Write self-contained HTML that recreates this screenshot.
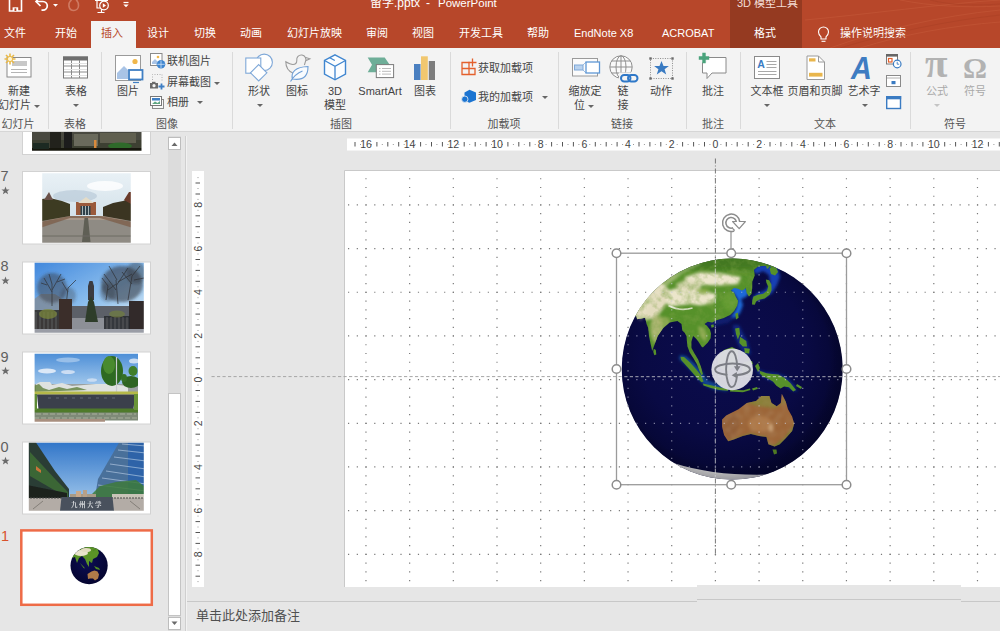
<!DOCTYPE html>
<html lang="zh-CN"><head><meta charset="utf-8"><title>PowerPoint</title>
<style>
html,body{margin:0;padding:0}
body{width:1000px;height:631px;overflow:hidden;position:relative;background:#e6e6e6;font-family:"Liberation Sans","Noto Sans CJK SC",sans-serif;font-size:11px;color:#444}
.a{position:absolute}
.t{position:absolute;white-space:nowrap;line-height:14px;height:14px}
.c{transform:translateX(-50%);text-align:center}
#top{left:0;top:0;width:1000px;height:47.5px;background:#b7472a}
#top .t{color:#fff;font-size:11px}
#ctx{left:730px;top:0;width:72px;height:48px;background:#953a21}
#tabon{left:91px;top:21px;width:45px;height:28px;background:#f3f3f3}
#rib{left:0;top:47px;width:1000px;height:84px;background:#f3f3f3;border-bottom:1px solid #d6d6d6}
#rib .t{color:#444;font-size:11px;margin-top:1px}
#rib i.a{margin-top:1px}
#rib .g{color:#555}
.sep{position:absolute;top:5px;width:1px;height:77px;background:#dadada}
svg{position:absolute;overflow:visible}
.dd{display:inline-block;width:0;height:0;border-left:3px solid transparent;border-right:3px solid transparent;border-top:3px solid #666;vertical-align:middle}
</style></head><body>

<!-- ===== TOP BAR ===== -->
<div id="top" class="a" style="z-index:2">
  <div id="ctx" class="a"></div>
  <div id="tabon" class="a"></div>
  <span class="t" style="left:4px;top:26px">文件</span>
  <span class="t" style="left:55px;top:26px">开始</span>
  <span class="t" style="left:101px;top:26px;color:#b7472a">插入</span>
  <span class="t" style="left:147px;top:26px">设计</span>
  <span class="t" style="left:194px;top:26px">切换</span>
  <span class="t" style="left:240px;top:26px">动画</span>
  <span class="t" style="left:287px;top:26px">幻灯片放映</span>
  <span class="t" style="left:366px;top:26px">审阅</span>
  <span class="t" style="left:412px;top:26px">视图</span>
  <span class="t" style="left:459px;top:26px">开发工具</span>
  <span class="t" style="left:527px;top:26px">帮助</span>
  <span class="t" style="left:574px;top:26px">EndNote X8</span>
  <span class="t" style="left:662px;top:26px">ACROBAT</span>
  <span class="t" style="left:754px;top:26px">格式</span>
  <span class="t" style="left:840px;top:26px">操作说明搜索</span>
  <span class="t" style="left:370px;top:-4px;font-size:12px">留学.pptx</span>
  <span class="t" style="left:426px;top:-4px;font-size:12px">-</span>
  <span class="t" style="left:438px;top:-4px;font-size:11.5px">PowerPoint</span>
  <span class="t" style="left:737px;top:-4px;font-size:11px;color:#f3dcd5">3D 模型工具</span>
  <svg style="left:0;top:0;overflow:hidden" width="1000" height="47.5" viewBox="0 0 1000 47.5" fill="none">
    <!-- decorative lines -->
    <g stroke="#c25636" stroke-width="1" opacity=".7"><path d="M830 48C880 30 940 16 1000 10M860 48C905 34 950 26 1000 22M900 0C930 6 965 8 1000 6M805 20C870 14 940 4 1000 0"/></g>
    <g stroke="#a93f24" stroke-width="1" opacity=".55"><path d="M840 48C890 33 945 21 1000 15M930 0C950 5 975 6 1000 4"/></g>
    <!-- save -->
    <path d="M9.500 -2v13h12v-13" stroke="#fff" stroke-width="1.600"/>
    <rect x="12.600" y="7.300" width="5.600" height="3.700" fill="#fff"/><rect x="14.500" y="8.300" width="1.800" height="2.700" fill="#b7472a"/>
    <!-- undo -->
    <path d="M36.500 1.500h6.500a4.300 4.300 0 0 1 0 8.600h-1.500" stroke="#fff" stroke-width="1.700"/>
    <path d="M40.500 -3l-4.500 4.500 4.500 4.500" stroke="#fff" stroke-width="1.700"/>
    <path d="M53 4l2.500 2.800 2.500-2.800z" fill="#fff"/>
    <!-- redo (disabled) -->
    <path d="M73.500 -2c-3 2-5 5-4.500 8.500.5 2.500 2.500 4 4.800 4s4.500-1.800 4.700-4.500c.2-3-1.500-6-4-8" stroke="#cf7a62" stroke-width="1.600"/>
    <!-- present -->
    <path d="M95 0.500h13M97 0.500v7.500h4M101.500 8v4M97.500 12.500h7" stroke="#fff" stroke-width="1.200"/>
    <circle cx="104" cy="5.500" r="4.300" fill="#b7472a" stroke="#fff" stroke-width="1.200"/><path d="M102.800 3.300l3.200 2.200-3.200 2.200z" fill="#fff"/>
    <!-- customize -->
    <path d="M123.500 2.500h5" stroke="#fff" stroke-width="1.200"/><path d="M123.300 4.500l2.700 2.800 2.700-2.800z" fill="#fff"/>
    <!-- lightbulb -->
    <path d="M821 36.800c-1.800-1.500-2.500-3.100-2.500-4.800a5 5 0 0 1 10 0c0 1.700-.7 3.300-2.500 4.800v2.200h-5z" stroke="#fff" stroke-width="1.100"/>
    <path d="M821.500 41.300h4" stroke="#fff" stroke-width="1.100"/>
  </svg>
</div>

<!-- ===== RIBBON ===== -->
<div id="rib" class="a">
  <div class="sep" style="left:48px"></div><div class="sep" style="left:101px"></div><div class="sep" style="left:232px"></div>
  <div class="sep" style="left:450px"></div><div class="sep" style="left:558px"></div><div class="sep" style="left:686px"></div>
  <div class="sep" style="left:740px"></div><div class="sep" style="left:910px"></div>
  <!-- big button labels (top = y-48-7) -->
  <span class="t c" style="left:19px;top:36px">新建</span>
  <span class="t" style="left:-2px;top:50px">幻灯片 <i class="dd"></i></span>
  <span class="t c" style="left:76px;top:36px">表格</span><i class="dd a" style="left:73px;top:56px"></i>
  <span class="t c" style="left:128px;top:36px">图片</span>
  <span class="t" style="left:167px;top:6px">联机图片</span>
  <span class="t" style="left:167px;top:27px">屏幕截图 <i class="dd"></i></span>
  <span class="t" style="left:167px;top:47px">相册</span><i class="dd a" style="left:197px;top:53px"></i>
  <span class="t c" style="left:259px;top:36px">形状</span><i class="dd a" style="left:257px;top:56px"></i>
  <span class="t c" style="left:297px;top:36px">图标</span>
  <span class="t c" style="left:335px;top:36px">3D</span>
  <span class="t c" style="left:335px;top:50px">模型</span>
  <span class="t c" style="left:380px;top:36px">SmartArt</span>
  <span class="t c" style="left:425px;top:36px">图表</span>
  <span class="t" style="left:478px;top:13px">获取加载项</span>
  <span class="t" style="left:478px;top:42px">我的加载项</span><i class="dd a" style="left:542px;top:48px"></i>
  <span class="t c" style="left:585px;top:36px">缩放定</span>
  <span class="t" style="left:574px;top:50px">位 <i class="dd"></i></span>
  <span class="t c" style="left:623px;top:36px">链</span>
  <span class="t c" style="left:623px;top:50px">接</span>
  <span class="t c" style="left:661px;top:36px">动作</span>
  <span class="t c" style="left:713px;top:36px">批注</span>
  <span class="t c" style="left:767px;top:36px">文本框</span><i class="dd a" style="left:764px;top:56px"></i>
  <span class="t c" style="left:815px;top:36px">页眉和页脚</span>
  <span class="t c" style="left:864px;top:36px">艺术字</span><i class="dd a" style="left:862px;top:56px"></i>
  <span class="t c" style="left:937px;top:36px;color:#a9a9a9">公式</span><i class="dd a" style="left:934px;top:56px;border-top-color:#c4c4c4"></i>
  <span class="t c" style="left:975px;top:36px;color:#a9a9a9">符号</span>
  <!-- group labels -->
  <span class="t c g" style="left:18px;top:69px">幻灯片</span>
  <span class="t c g" style="left:75px;top:69px">表格</span>
  <span class="t c g" style="left:167px;top:69px">图像</span>
  <span class="t c g" style="left:341px;top:69px">插图</span>
  <span class="t c g" style="left:504px;top:69px">加载项</span>
  <span class="t c g" style="left:622px;top:69px">链接</span>
  <span class="t c g" style="left:713px;top:69px">批注</span>
  <span class="t c g" style="left:825px;top:69px">文本</span>
  <span class="t c g" style="left:955px;top:69px">符号</span>
  <!--ICONS-->
<svg style="left:0;top:1px" width="1000" height="83" viewBox="0 48 1000 83" fill="none" stroke-linejoin="miter">
  <!-- new slide -->
  <rect x="7" y="57.5" width="24" height="19.5" fill="#fff" stroke="#8a8a8a" stroke-width="1"/>
  <rect x="12" y="61" width="15" height="5" fill="#c8c8c8"/>
  <path d="M11 69.5h16M11 72.500h16" stroke="#b5b5b5" stroke-width="1"/>
  <g stroke="#e9b949" stroke-width="1.6" stroke-linecap="butt"><path d="M10 53.500v11M4.500 59h11M6 55l8 8M14 55l-8 8"/></g>
  <circle cx="10" cy="59" r="2.600" fill="#fff5d6" stroke="#e9b949" stroke-width="1"/>
  <!-- table -->
  <rect x="63.500" y="57" width="24" height="21" fill="#fff" stroke="#7a7a7a" stroke-width="1"/>
  <rect x="63" y="56.500" width="25" height="4" fill="#6e6e6e"/>
  <path d="M63.500 66h24M63.500 72h24M71.500 60v18M79.500 60v18" stroke="#8a8a8a" stroke-width="1"/>
  <path d="M64 63.500h23M64 69.500h23M64 75.500h23" stroke="#e2e2e2" stroke-width="1"/>
  <!-- picture -->
  <rect x="115.500" y="55.500" width="25" height="25" fill="#fff" stroke="#9a9a9a" stroke-width="1"/>
  <path d="M117 79v-6l7-7 4 4v9z" fill="#a9c4e6"/>
  <circle cx="135" cy="61.500" r="2.600" fill="#f0b74a"/>
  <rect x="129" y="70" width="13.500" height="9.500" fill="#fff" stroke="#3f7fc4" stroke-width="1.800"/>
  <path d="M133 82.500h6" stroke="#3f7fc4" stroke-width="1.200"/>
  <!-- online picture -->
  <rect x="150.500" y="53.500" width="11.500" height="12" fill="#fff" stroke="#8a8a8a" stroke-width="1"/>
  <path d="M152 64v-2l3-3 2 2v3z" fill="#a9c4e6"/><circle cx="158" cy="57" r="1.300" fill="#f0b74a"/>
  <circle cx="161" cy="64.300" r="4.300" fill="#3f86d0"/>
  <path d="M161 60.500v7.600M157.300 64.300h7.400" stroke="#cfe2f6" stroke-width=".8"/>
  <!-- screenshot -->
  <path d="M152.500 80v-5.500h9.500v6" stroke="#b0b0b0" stroke-width="1" stroke-dasharray="1 1.500"/>
  <rect x="150" y="83" width="8" height="5.500" fill="#6a6a6a"/><rect x="152" y="81.800" width="3.500" height="1.500" fill="#6a6a6a"/>
  <circle cx="154" cy="85.700" r="1.600" fill="#f3f3f3"/>
  <path d="M161.500 83.500v6M158.500 86.500h6" stroke="#3f7fc4" stroke-width="1.800"/>
  <!-- album -->
  <rect x="152.500" y="99.500" width="11" height="9" fill="#f8f8f8" stroke="#8a8a8a" stroke-width="1"/>
  <rect x="150.500" y="96.500" width="11" height="9" fill="#fff" stroke="#777" stroke-width="1"/>
  <rect x="152" y="98" width="8" height="2.500" fill="#3f7fc4"/>
  <path d="M152 104l3-2.500 2.500 1.500 2.500-2v3z" fill="#5fa783"/>
  <!-- shapes -->
  <circle cx="264.200" cy="62.300" r="8.200" fill="#fff" stroke="#7fa8d8" stroke-width="1.100"/>
  <rect x="245.800" y="58" width="15" height="15.200" fill="#fff" stroke="#7fa8d8" stroke-width="1.100"/>
  <path d="M258.700 64.600l8.200 8.200-8.200 8.200-8.200-8.200z" fill="#fff" stroke="#7fa8d8" stroke-width="1.100"/>
  <!-- icons (duck + leaf) -->
  <path d="M296.800 60.500a4.600 4.600 0 1 1 8.600 1.200l-1 3.300M305.800 57.500l4 1.300-3.500 1.600M296.800 60.500c0 3-1.500 4-4 4-2.500 0-5-1.500-7-2.700 0 6 2.500 9.500 7.500 11.500" stroke="#9a9a9a" stroke-width="1.100" fill="none"/>
  <path d="M292.500 79c-2-7 3-12 15.500-12.500 0 8-3 14.500-15.500 12.500z" fill="#f8fbfe" stroke="#6f9fd6" stroke-width="1.100"/>
  <path d="M290.500 81.500c3-5 7-8.500 12-10.500" stroke="#6f9fd6" stroke-width="1.100"/>
  <!-- 3D cube -->
  <path d="M335 54.800l10.500 5.700v13.500l-10.500 5.800-10.500-5.800v-13.500z" fill="#fbfdff" stroke="#3f86d0" stroke-width="1.400"/>
  <path d="M324.500 60.500l10.500 5.700 10.500-5.700M335 66.200v13.500M329.800 57.700l5 2.800" stroke="#3f86d0" stroke-width="1.300"/>
  <!-- SmartArt -->
  <path d="M367.700 57.400h17l5 7.400-5 7.400h-17l4.300-7.400z" fill="#6eae98"/>
  <rect x="376.300" y="64.600" width="17.300" height="13" fill="#fff" stroke="#7a7a7a" stroke-width="1"/>
  <path d="M379 68.500h1.500M382 68.500h9M379 71.300h1.500M382 71.300h9M379 74.100h1.500M382 74.100h9" stroke="#a8a8a8" stroke-width=".8"/>
  <!-- chart -->
  <rect x="414" y="64" width="6.500" height="16" fill="#4a7fc0"/><rect x="421" y="56.300" width="6.800" height="23.700" fill="#f1c76f"/><rect x="428.800" y="61" width="6.200" height="19" fill="#7d7d7d"/>
  <!-- get addins -->
  <path d="M462 62.500h7v12h-7zM462 68.500h13v6h-6M469 68.500v6M475 68.500v6" stroke="#e4602c" stroke-width="1.300"/>
  <path d="M472.500 58.500v8M468.500 62.500h8" stroke="#e4602c" stroke-width="1.300"/>
  <!-- my addins -->
  <path d="M469.500 89.800l6.500 2.700v7.500l-6.500 2.800-5-2v-8.300z" fill="#1b74d1"/>
  <circle cx="464.800" cy="99.200" r="3.200" fill="#1b74d1" stroke="#f3f3f3" stroke-width=".8"/>
  <!-- zoom -->
  <rect x="572.500" y="58.500" width="25" height="17.500" fill="#fbfbfb" stroke="#9a9a9a" stroke-width="1"/>
  <path d="M583 65l3-3M583 70l3 3" stroke="#9fbfe3" stroke-width="1"/>
  <rect x="574.500" y="65" width="8.500" height="5" fill="#b9d2ee" stroke="#7fa8d8" stroke-width="1"/>
  <rect x="586" y="62" width="13.500" height="11" fill="#fff" stroke="#5f97d5" stroke-width="1.300"/>
  <!-- link globe -->
  <circle cx="621" cy="67" r="11.200" fill="#fafafa" stroke="#8f8f8f" stroke-width="1"/>
  <ellipse cx="621" cy="67" rx="5" ry="11.200" stroke="#8f8f8f" stroke-width="1"/>
  <path d="M621 55.800v22.400M610 67h22M611.500 61h19M611.500 73h19" stroke="#8f8f8f" stroke-width="1"/>
  <rect x="619" y="72.500" width="20" height="11" fill="#f3f3f3"/>
  <rect x="621" y="75" width="9.500" height="6.500" rx="3.200" stroke="#2f78c8" stroke-width="2"/>
  <rect x="628" y="75" width="9.500" height="6.500" rx="3.200" stroke="#2f78c8" stroke-width="2"/>
  <!-- action -->
  <rect x="650.500" y="58.500" width="22" height="20" stroke="#8a8a8a" stroke-width="1" stroke-dasharray="1 1.400"/>
  <g fill="#6a6a6a"><rect x="649.300" y="57.300" width="2.400" height="2.400"/><rect x="671.300" y="57.300" width="2.400" height="2.400"/><rect x="649.300" y="77.300" width="2.400" height="2.400"/><rect x="671.300" y="77.300" width="2.400" height="2.400"/></g>
  <path d="M661.500 61l2 5h5.400l-4.300 3.300 1.600 5.200-4.700-3.200-4.700 3.200 1.600-5.200-4.300-3.300h5.400z" fill="#3a7bc2"/>
  <!-- comment -->
  <path d="M702.500 57.500h23.500v15.500h-14l-5 5.500v-5.500h-4.500z" fill="#fff" stroke="#8a8a8a" stroke-width="1"/>
  <path d="M704 52.500v10M699 57.500h10" stroke="#f3f3f3" stroke-width="5.500"/>
  <path d="M704 52.800v10.400M698.800 58h10.400" stroke="#4aa37c" stroke-width="3.400"/>
  <!-- textbox -->
  <rect x="754.500" y="56.500" width="25" height="22" fill="#fff" stroke="#8a8a8a" stroke-width="1"/>
  <path d="M766.500 61.500h10M766.500 64.500h10M766.500 67.500h10M758 71.500h18.500M758 74.500h18.500" stroke="#a8a8a8" stroke-width="1"/>
  <text x="757.300" y="68.300" font-family="Liberation Sans,sans-serif" font-size="10.500" font-weight="bold" fill="#3a7bc2" stroke="none">A</text>
  <!-- header footer -->
  <path d="M807 56h11.500l6 6v17.500h-17.500z" fill="#fff" stroke="#9a9a9a" stroke-width="1"/>
  <path d="M818.500 56v6h6" stroke="#9a9a9a" stroke-width="1"/>
  <rect x="809" y="58.300" width="6.500" height="3.200" fill="#e9b64c"/><rect x="809" y="72.800" width="13.500" height="3.800" fill="#e9b64c"/>
  <!-- wordart -->
  <text x="851" y="79.500" font-family="Liberation Sans,sans-serif" font-size="31" font-style="italic" font-weight="bold" fill="#3e7cc2" stroke="none" transform="translate(851 79.500) scale(.93 1) translate(-851 -79.500)">A</text>
  <!-- small text icons -->
  <rect x="886.500" y="54.500" width="11" height="9.500" fill="#fff" stroke="#777" stroke-width="1"/><rect x="886" y="54" width="12" height="2.600" fill="#666"/>
  <rect x="888.500" y="58.500" width="3.500" height="3.500" fill="#fff" stroke="#e4602c" stroke-width="1.200"/>
  <circle cx="897.200" cy="64" r="3.800" fill="#fff" stroke="#3a7bc2" stroke-width="1.200"/><path d="M897.200 61.800v2.400h2" stroke="#3a7bc2" stroke-width=".9"/>
  <rect x="886.500" y="75.500" width="14" height="11" fill="#fff" stroke="#8a8a8a" stroke-width="1"/><path d="M887 78h13" stroke="#b0b0b0" stroke-width="1"/><rect x="891.500" y="81" width="4" height="3.200" fill="#3a7bc2"/>
  <rect x="886.700" y="96.700" width="13.800" height="11.800" fill="#fff" stroke="#3a7bc2" stroke-width="1.400"/><rect x="886" y="96" width="15.200" height="3.300" fill="#3a7bc2"/>
  <!-- pi omega -->
  <text x="925" y="77.300" font-family="Liberation Serif,serif" font-size="41" font-weight="bold" fill="#b2b2b2" stroke="none">π</text>
  <text x="963" y="77.600" font-family="Liberation Serif,serif" font-size="30" font-weight="bold" fill="#b2b2b2" stroke="none">Ω</text>
</svg>
</div>

<!-- ===== LEFT PANEL ===== -->
<div id="left" class="a" style="left:0;top:132px;width:190px;height:499px;overflow:hidden">
<svg style="left:0;top:0" width="190" height="499" viewBox="0 132 190 499">
<defs>
<filter id="tb" x="-5%" y="-5%" width="110%" height="110%"><feGaussianBlur stdDeviation="0.6"/></filter>
<filter id="tb2" x="-10%" y="-10%" width="120%" height="120%"><feGaussianBlur stdDeviation="1.6"/></filter>
<linearGradient id="sky7" x1="0" y1="0" x2="0" y2="1"><stop offset="0" stop-color="#e9f1f6"/><stop offset="1" stop-color="#d4e2ea"/></linearGradient>
<linearGradient id="sky8" x1="0" y1="0" x2="1" y2="1"><stop offset="0" stop-color="#3f86dc"/><stop offset=".6" stop-color="#8ec0ee"/><stop offset="1" stop-color="#d9ebf7"/></linearGradient>
<linearGradient id="sky9" x1="0" y1="0" x2="0" y2="1"><stop offset="0" stop-color="#4a8cd6"/><stop offset="1" stop-color="#a9cdee"/></linearGradient>
<linearGradient id="sky10" x1="0" y1="0" x2="0" y2="1"><stop offset="0" stop-color="#2f74c8"/><stop offset="1" stop-color="#9cc4ea"/></linearGradient>
<radialGradient id="mg" cx=".45" cy=".4" r=".6"><stop offset="0" stop-color="#0c0d55"/><stop offset="1" stop-color="#050530"/></radialGradient>
<clipPath id="c6"><rect x="32" y="132" width="109.500" height="18.800"/></clipPath>
<clipPath id="c7"><rect x="42.200" y="173.300" width="88.600" height="69.400"/></clipPath>
<clipPath id="c8"><rect x="34.600" y="262.800" width="109.200" height="70"/></clipPath>
<clipPath id="c9"><rect x="34.600" y="353.800" width="103.400" height="68"/></clipPath>
<clipPath id="c10"><rect x="28.800" y="442.800" width="115" height="68"/></clipPath>
<clipPath id="c11"><circle cx="89.100" cy="565.600" r="18.600"/></clipPath>
</defs>
<!-- slide frames -->
<g fill="#fff" stroke="#d2d2d2" stroke-width="1">
<rect x="22.500" y="120" width="128" height="34.500"/>
<rect x="22.500" y="171.500" width="128" height="72.500"/>
<rect x="22.500" y="262" width="128" height="72"/>
<rect x="22.500" y="352" width="128" height="72"/>
<rect x="22.500" y="442" width="128" height="72"/>
</g>
<rect x="21.300" y="530.400" width="130.500" height="74.400" fill="#fff" stroke="#ee6b47" stroke-width="2.500"/>
<!-- 6 -->
<g clip-path="url(#c6)"><g filter="url(#tb)">
<rect x="30" y="130" width="114" height="22" fill="#3d3f33"/>
<rect x="30" y="130" width="114" height="10" fill="#4a4a40"/>
<rect x="50" y="132" width="11" height="16" fill="#23241f"/><rect x="64" y="132" width="8" height="16" fill="#1c1d1a"/>
<rect x="74" y="134" width="24" height="12" fill="#6b6b5c"/>
<rect x="100" y="133" width="36" height="10" fill="#605f50"/>
<ellipse cx="120" cy="146" rx="12" ry="3.500" fill="#2f6a2a"/>
<rect x="94" y="140" width="2.500" height="8" fill="#d98a3a"/>
<rect x="30" y="148" width="114" height="4" fill="#15160f"/>
<rect x="33" y="143" width="16" height="6" fill="#1f2a22"/>
</g></g>
<!-- 7 -->
<g clip-path="url(#c7)"><g filter="url(#tb)">
<rect x="40" y="172" width="93" height="45" fill="url(#sky7)"/>
<ellipse cx="75" cy="196" rx="22" ry="6" fill="#b9cbd8" opacity=".7"/>
<ellipse cx="105" cy="186" rx="18" ry="5" fill="#fff" opacity=".8"/>
<rect x="40" y="216" width="93" height="28" fill="#8f8b84"/>
<path d="M40 216h93v4h-93z" fill="#a99a8c"/>
<path d="M40 222l30-6h30l33 6v6l-33-10h-30l-30 10z" fill="#7a5a45" opacity=".7"/>
<path d="M42 199l8-1 12 3 8 3 0 12-28 5z" fill="#3d3a24"/>
<path d="M44 200l5-8 4 8z" fill="#6a5148"/>
<path d="M131 198l-8 3-10 2-10 4 0 9 28 5z" fill="#3a3423"/>
<path d="M124 200l5-8 2 0 0 12z" fill="#6b3a2a"/>
<rect x="76" y="202" width="20" height="13" fill="#9a5a3a"/>
<path d="M78 203l8-6 8 6z" fill="#e4dcc8"/>
<rect x="80.500" y="206" width="10" height="9" fill="#2f4148"/>
<path d="M82.500 206v9M85.500 206v9M88.500 206v9" stroke="#c9d4d4" stroke-width=".8"/>
<path d="M84.500 218h3.500l2.500 24h-8.500z" fill="#5f5f55"/>
<path d="M42 236h89" stroke="#6d6a63" stroke-width="1"/>
</g></g>
<!-- 8 -->
<g clip-path="url(#c8)"><g filter="url(#tb)">
<rect x="33" y="261" width="112" height="60" fill="url(#sky8)"/>
<rect x="33" y="315" width="112" height="20" fill="#8d9097"/>
<rect x="60" y="306" width="78" height="12" fill="#5c6068"/>
<path d="M33 300l8-6 14 0 6 4 4 8 0 14-32 0z" fill="#7e8ea0" opacity=".9"/>
<g stroke="#2a2a2a" stroke-width=".9" opacity=".75" fill="none">
<path d="M52 306l0-22M52 292l-8-14M52 290l9-16M52 284l-3-10M47 285l-6-2M57 282l8-3M66 306l2-18 8-8M68 292l-6-10"/>
<path d="M118 304l-2-24M116 290l-12-16M116 286l12-18M117 280l-8-14M118 282l14-8M128 300l4-24 8-10M132 284l-10-12M134 280l10-2M106 300l2-14-6-8M108 290l8-6"/>
</g>
<g filter="url(#tb2)"><ellipse cx="122" cy="284" rx="21" ry="18" fill="#2f2f33" opacity=".55"/><ellipse cx="136" cy="273" rx="10" ry="11" fill="#2f2f33" opacity=".4"/><ellipse cx="108" cy="292" rx="8" ry="10" fill="#2f2f33" opacity=".35"/></g>
<g filter="url(#tb2)"><ellipse cx="52" cy="288" rx="15" ry="15" fill="#34363a" opacity=".45"/><ellipse cx="68" cy="296" rx="8" ry="9" fill="#34363a" opacity=".3"/></g>
<path d="M88 286l1.500-5h3l1.500 5 0 14-6 0z" fill="#3b3b3f"/>
<path d="M85 322l3-20 3-6 3 6 4 20z" fill="#2f3d2c"/>
<rect x="34" y="310" width="26" height="22" fill="#2b2a28" opacity=".85"/>
<rect x="59" y="299" width="13" height="32" fill="#3a2f2b"/>
<rect x="129" y="301" width="15" height="30" fill="#332b29"/>
<rect x="104" y="316" width="26" height="14" fill="#26282c" opacity=".85"/>
<path d="M36 312v18M40 312v18M44 312v18M48 312v18M52 312v18M56 312v18M107 317v12M111 317v12M115 317v12M119 317v12M123 317v12M127 317v12" stroke="#9aa0a4" stroke-width=".6" opacity=".6"/>
<ellipse cx="48" cy="314" rx="9" ry="5" fill="#7f8a3a" opacity=".7"/>
<ellipse cx="117" cy="314" rx="8" ry="3.500" fill="#6f7a45" opacity=".8"/>
<rect x="33" y="329" width="112" height="5" fill="#9a9da6"/>
</g></g>
<!-- 9 -->
<g clip-path="url(#c9)"><g filter="url(#tb)">
<rect x="33" y="352" width="107" height="36" fill="url(#sky9)"/>
<ellipse cx="47" cy="371" rx="9" ry="2.500" fill="#e6eef8" opacity=".9"/><ellipse cx="68" cy="372" rx="7" ry="2" fill="#dfe9f6" opacity=".8"/>
<ellipse cx="68" cy="360" rx="12" ry="2.500" fill="#9fc3ea" opacity=".9"/><ellipse cx="134" cy="361" rx="5" ry="2.500" fill="#e6eef8" opacity=".8"/><ellipse cx="92" cy="380" rx="5" ry="1.800" fill="#d6e4f4" opacity=".8"/>
<rect x="33" y="384" width="107" height="9" fill="#9aa0a0"/>
<path d="M36 384l4-2 10 0 2 3 10-2 10 3 24-2 12 0 20 2 0 8-92 0z" fill="#dfe2e0"/>
<path d="M33 386l6-2 4 4 6 2 10-3 8 2 10-2 10 3-54 2z" fill="#5e7f3a" opacity=".8"/>
<ellipse cx="112" cy="371" rx="11" ry="15" fill="#2f6a22"/><ellipse cx="109" cy="365" rx="6" ry="9" fill="#4a8a2f"/>
<ellipse cx="133" cy="371" rx="4.500" ry="5" fill="#3f7f2a"/><ellipse cx="131" cy="382" rx="9" ry="6" fill="#2f6524"/>
<ellipse cx="124" cy="378" rx="3" ry="4" fill="#356f28"/>
<path d="M116.500 357v36" stroke="#c9ccd0" stroke-width="1.200"/>
<rect x="33" y="391.500" width="107" height="3.200" fill="#b5b94a"/>
<path d="M37 394.500h98l-1.500 15h-95z" fill="#3b404b"/>
<path d="M48 398h70" stroke="#6a707c" stroke-width=".8" stroke-dasharray="3 5"/>
<rect x="33" y="408.500" width="107" height="5" fill="#4f7a2c"/>
<rect x="33" y="394" width="4" height="16" fill="#5d8a34"/><rect x="134" y="394" width="5" height="16" fill="#6a9438"/>
<rect x="33" y="412.500" width="107" height="8" fill="#7f8a78"/>
<path d="M36 414h100M34 418h104" stroke="#a9b09c" stroke-width="1.200" stroke-dasharray="5 2"/>
<rect x="33" y="419" width="72" height="4" fill="#a88f7f"/>
</g></g>
<!-- 10 -->
<g clip-path="url(#c10)"><g filter="url(#tb)">
<rect x="27" y="441" width="119" height="60" fill="url(#sky10)"/>
<path d="M27 441l8 0 20 30 14 18 0 14-42 6z" fill="#2c3d36"/>
<path d="M30 452l26 28 12 12 0 6-38-22z" fill="#3e7036" opacity=".8"/>
<path d="M36 466l5 4 0 3-5-3z" fill="#c9743a"/>
<path d="M27 485l40 8 0 10-40 4z" fill="#1d211f"/>
<path d="M146 441l-26 0-22 38-2 12 0 10 50 4z" fill="#4a6f9a"/>
<path d="M146 441l-18 0 0 56 18 2z" fill="#2f64a8"/>
<path d="M122 444l24 2M118 450l28 3M114 457l32 4M110 464l36 5M106 471l40 6M102 478l44 6M98 485l48 6" stroke="#b9cfe6" stroke-width=".9" opacity=".7"/>
<path d="M90 496l10-10 16-4 20-2 8 6 0 10-54 4z" fill="#3d7a3a" opacity=".85"/>
<rect x="112" y="494" width="34" height="6" fill="#c9c4b8"/><rect x="118" y="499" width="4" height="6" fill="#d8d4c8"/><rect x="132" y="499" width="4" height="6" fill="#d8d4c8"/>
<rect x="70" y="494" width="26" height="6" fill="#a89a86"/><rect x="76" y="491" width="5" height="8" fill="#c9a98a"/><rect x="83" y="490" width="4" height="9" fill="#b8a088"/>
<rect x="27" y="498" width="119" height="14" fill="#b3aca6"/>
<path d="M27 498h119" stroke="#4a4a48" stroke-width="1.200" stroke-dasharray="2 1"/>
<path d="M33 509l10-8M140 509l-10-8" stroke="#77726c" stroke-width=".8"/>
<path d="M61.500 497h51l1.500 14h-54z" fill="#48515d"/>
</g></g>
<text x="87" y="506.800" text-anchor="middle" font-family="Noto Serif CJK SC,Noto Sans CJK SC,serif" font-size="6.500" font-weight="bold" fill="#e8eaec" letter-spacing="1.500" opacity=".92">九州大学</text>
<!-- 11 mini globe -->
<circle cx="89.100" cy="565.600" r="18.600" fill="url(#mg)"/>
<g clip-path="url(#c11)"><g filter="url(#tb)">
<path d="M72 558l3-1 2 6 2-5 3-2 3 3 2 5 2 3 0-6 3 2 1-4 4-2 2-4-1-3 3 0 1-5 5 0-4-6-22-4-14 10z" fill="#5a9428"/>
<ellipse cx="81" cy="553" rx="7" ry="3" fill="#e9e4cc"/><ellipse cx="86" cy="550" rx="5" ry="2" fill="#e2dcc0"/>
<path d="M87.500 574l4-2.500 3-1 3 1 1.500 3-1 4-3 2-2-2-3 0-2 .500z" fill="#b07a48"/>
<path d="M94 566l5 2 1 2-4-1z" fill="#4f8a24"/><path d="M80 563l4 4 1 1.500-1.500-.500z" fill="#4f8a24"/><path d="M90 558l1.500 4-1 .500z" fill="#4f8a24"/>
<path d="M92.500 550l3-2 1-3 1 1-1 3-3 2.500z" fill="#4f8a24"/>
</g></g>
<!-- numbers -->
<g font-family="Liberation Sans,sans-serif" font-size="14.500" fill="#5f5f5f">
<text x="0.500" y="181">7</text><text x="0.500" y="271">8</text><text x="0.500" y="361.500">9</text><text x="0.500" y="451.500">0</text>
<text x="1" y="540.500" fill="#d9512c">1</text>
</g>
<g fill="#6a6a6a">
<path id="st" d="M5.500 186.500l1.100 2.900h3l-2.400 1.900.9 3-2.600-1.800-2.600 1.800.9-3-2.400-1.900h3z"/>
<use href="#st" y="90"/><use href="#st" y="180.300"/><use href="#st" y="270.300"/>
</g>
<!-- scrollbar -->
<rect x="168" y="136" width="13" height="495" fill="#dcdcdc"/>
<rect x="168.500" y="137.500" width="12" height="12" fill="#fff" stroke="#bdbdbd" stroke-width="1"/>
<path d="M171.500 146l3-3.500 3 3.500z" fill="#6a6a6a"/>
<rect x="168.500" y="393.500" width="12" height="222" fill="#fff" stroke="#c4c4c4" stroke-width="1"/>
<rect x="168.500" y="617.500" width="12" height="12" fill="#fff" stroke="#bdbdbd" stroke-width="1"/>
<path d="M171.500 621.500l3 3.500 3-3.500z" fill="#6a6a6a"/>
<path d="M185.500 136v495" stroke="#cfcfcf" stroke-width="1"/>
<path d="M186.500 136v495" stroke="#f2f2f2" stroke-width="1"/>
</svg>
</div>

<!-- ===== WORKSPACE ===== -->
<div id="work" class="a" style="left:0;top:0;width:1000px;height:631px">
<svg id="ws" style="left:0;top:0" width="1000" height="631" viewBox="0 0 1000 631" fill="none">
<defs>
<clipPath id="gc"><circle cx="732.2" cy="369.100" r="110.500"/></clipPath>
<radialGradient id="og" cx="0.46" cy="0.42" r="0.62"><stop offset="0" stop-color="#0b0c4e"/><stop offset="0.6" stop-color="#090a44"/><stop offset="1" stop-color="#04052c"/></radialGradient>
<radialGradient id="lg" cx="0.47" cy="0.465" r="0.545"><stop offset="0.86" stop-color="#000" stop-opacity="0"/><stop offset="1" stop-color="#000018" stop-opacity="0.32"/></radialGradient>
<filter id="b1" x="-20%" y="-20%" width="140%" height="140%"><feGaussianBlur stdDeviation="0.7"/></filter>
<filter id="b3" x="-30%" y="-30%" width="160%" height="160%"><feGaussianBlur stdDeviation="3"/></filter>
<filter id="b2" x="-30%" y="-30%" width="160%" height="160%"><feGaussianBlur stdDeviation="1.6"/></filter>
<filter id="nz" x="0" y="0" width="100%" height="100%"><feTurbulence type="fractalNoise" baseFrequency=".13" numOctaves="3" seed="7"/><feColorMatrix type="matrix" values="0 0 0 0 .2  0 0 0 0 .36  0 0 0 0 .06  2.2 0 0 0 -.9"/></filter>
<filter id="nz2" x="0" y="0" width="100%" height="100%"><feTurbulence type="fractalNoise" baseFrequency=".16" numOctaves="3" seed="3"/><feColorMatrix type="matrix" values="0 0 0 0 .42  0 0 0 0 .25  0 0 0 0 .12  2.2 0 0 0 -.9"/></filter>
<clipPath id="asiac"><path d="M636.3 316.1 L637.1 319.3 L641.1 318.5 L645.1 317.7 L646.6 324.1 L648.2 328 L649 336 L650.6 343.9 L652.2 351 L655.4 342.3 L657.7 336 L663.3 328 L669.6 322.5 L677.5 320.9 L681.5 324.1 L682.3 330.4 L684.7 332.8 L686.5 336 L686.8 340 L687.5 346.6 L689.6 352.2 L693.1 357.8 L696.6 363.4 L698.7 369 L700.1 372.5 L701.5 375.3 L702.9 373.9 L700.8 366.2 L698 359.2 L694.5 353.6 L691.5 348 L691.3 342 L693.1 336 L696 338.5 L698 341 L701.5 346.6 L702.9 347.6 L707.8 342.4 L710.6 338.2 L711 333.5 L709.9 329.6 L706.9 325.7 L704.5 324.1 L707.7 321.7 L712.4 322.5 L715.8 320.5 L723.8 318.1 L730.1 315 L734.1 311 L737.2 305.5 L738 300.7 L735.7 296.8 L734.1 292.8 L730.9 290.4 L734.1 288 L738 288.8 L742 290.4 L745.2 288.8 L745.8 287.6 L746.6 292.8 L749 296.6 L751.6 293.8 L752.2 288 L752.3 281.7 L754.7 275.4 L753.9 269.8 L757.8 266.6 L763.4 265.8 L769.7 266.6 L772.9 267.7 L785 250 L700 235 L620 255 L610 300 L625 318z"/></clipPath><clipPath id="ausc"><path d="M722.100 419.600l4.100-4.100 12.300-6.200 8.300-6.200 9.300-2 5.100-5.200 8.200 0 2.100 7.200 5.200 3.100 4.100-3.100 1-9.300 4.100 8.300 2.100 7.200 4.100 7.200 2.100 7.200-2.100 7.200-6.200 7.200-6.200 6.200-5.100 2.100-6.200-2.100-2-7.200-7.300-1-8.200-2.100-8.200 2.100-8.300 3.100-6.200 2-4.100-6.200-2-8.200z"/></clipPath>
</defs>
<rect x="347" y="138.5" width="653" height="12" fill="#fff"/>
<rect x="192" y="171" width="12" height="416" fill="#fff"/>
<path d="M355.0 142v4.500M376.9 142v4.500M387.8 142v4.500M398.7 142v4.500M420.6 142v4.500M431.5 142v4.500M442.4 142v4.500M464.2 142v4.500M475.2 142v4.500M486.1 142v4.500M507.9 142v4.500M518.8 142v4.500M529.8 142v4.500M551.6 142v4.500M562.5 142v4.500M573.4 142v4.500M595.3 142v4.500M606.2 142v4.500M617.1 142v4.500M639.0 142v4.500M649.9 142v4.500M660.8 142v4.500M682.6 142v4.500M693.6 142v4.500M704.5 142v4.500M726.3 142v4.500M737.2 142v4.500M748.2 142v4.500M770.0 142v4.500M780.9 142v4.500M791.8 142v4.500M813.7 142v4.500M824.6 142v4.500M835.5 142v4.500M857.4 142v4.500M868.3 142v4.500M879.2 142v4.500M901.0 142v4.500M912.0 142v4.500M922.9 142v4.500M944.7 142v4.500M955.6 142v4.500M966.6 142v4.500M988.4 142v4.500M999.3 142v4.500" stroke="#555" stroke-width="1"/>
<path d="M360.5 144v1M371.4 144v1M382.3 144v1M393.3 144v1M404.2 144v1M415.1 144v1M426.0 144v1M436.9 144v1M447.9 144v1M458.8 144v1M469.7 144v1M480.6 144v1M491.5 144v1M502.5 144v1M513.4 144v1M524.3 144v1M535.2 144v1M546.1 144v1M557.1 144v1M568.0 144v1M578.9 144v1M589.8 144v1M600.7 144v1M611.7 144v1M622.6 144v1M633.5 144v1M644.4 144v1M655.3 144v1M666.3 144v1M677.2 144v1M688.1 144v1M699.0 144v1M709.9 144v1M720.9 144v1M731.8 144v1M742.7 144v1M753.6 144v1M764.5 144v1M775.5 144v1M786.4 144v1M797.3 144v1M808.2 144v1M819.1 144v1M830.1 144v1M841.0 144v1M851.9 144v1M862.8 144v1M873.7 144v1M884.7 144v1M895.6 144v1M906.5 144v1M917.4 144v1M928.3 144v1M939.3 144v1M950.2 144v1M961.1 144v1M972.0 144v1M982.9 144v1M993.9 144v1" stroke="#999" stroke-width="1"/>
<path d="M195.500 183.0h4.500M195.500 194.0h4.500M195.500 215.8h4.500M195.500 226.7h4.500M195.500 237.6h4.500M195.500 259.5h4.500M195.500 270.4h4.500M195.500 281.3h4.500M195.500 303.2h4.500M195.500 314.1h4.500M195.500 325.0h4.500M195.500 346.8h4.500M195.500 357.8h4.500M195.500 368.7h4.500M195.500 390.5h4.500M195.500 401.4h4.500M195.500 412.4h4.500M195.500 434.2h4.500M195.500 445.1h4.500M195.500 456.0h4.500M195.500 477.9h4.500M195.500 488.8h4.500M195.500 499.7h4.500M195.500 521.6h4.500M195.500 532.5h4.500M195.500 543.4h4.500M195.500 565.2h4.500M195.500 576.2h4.500" stroke="#555" stroke-width="1"/>
<path d="M197.500 177.6h1M197.500 188.5h1M197.500 199.4h1M197.500 210.3h1M197.500 221.3h1M197.500 232.2h1M197.500 243.1h1M197.500 254.0h1M197.500 264.9h1M197.500 275.9h1M197.500 286.8h1M197.500 297.7h1M197.500 308.6h1M197.500 319.5h1M197.500 330.5h1M197.500 341.4h1M197.500 352.3h1M197.500 363.2h1M197.500 374.1h1M197.500 385.1h1M197.500 396.0h1M197.500 406.9h1M197.500 417.8h1M197.500 428.7h1M197.500 439.7h1M197.500 450.6h1M197.500 461.5h1M197.500 472.4h1M197.500 483.3h1M197.500 494.3h1M197.500 505.2h1M197.500 516.1h1M197.500 527.0h1M197.500 537.9h1M197.500 548.9h1M197.500 559.8h1M197.500 570.7h1M197.500 581.6h1" stroke="#999" stroke-width="1"/>
<g font-family="Liberation Sans,sans-serif" font-size="10.500" fill="#444" text-anchor="middle">
<text x="366.0" y="148.300">16</text>
<text x="409.6" y="148.300">14</text>
<text x="453.3" y="148.300">12</text>
<text x="497.0" y="148.300">10</text>
<text x="540.7" y="148.300">8</text>
<text x="584.4" y="148.300">6</text>
<text x="628.0" y="148.300">4</text>
<text x="671.7" y="148.300">2</text>
<text x="715.4" y="148.300">0</text>
<text x="759.1" y="148.300">2</text>
<text x="802.8" y="148.300">4</text>
<text x="846.4" y="148.300">6</text>
<text x="890.1" y="148.300">8</text>
<text x="933.8" y="148.300">10</text>
<text x="977.5" y="148.300">12</text>
<text transform="translate(201.800 204.9) rotate(-90)">8</text>
<text transform="translate(201.800 248.6) rotate(-90)">6</text>
<text transform="translate(201.800 292.2) rotate(-90)">4</text>
<text transform="translate(201.800 335.9) rotate(-90)">2</text>
<text transform="translate(201.800 379.6) rotate(-90)">0</text>
<text transform="translate(201.800 423.3) rotate(-90)">2</text>
<text transform="translate(201.800 467.0) rotate(-90)">4</text>
<text transform="translate(201.800 510.6) rotate(-90)">6</text>
<text transform="translate(201.800 554.3) rotate(-90)">8</text>
</g>
<rect x="344.5" y="170.5" width="660" height="416.5" fill="#fff"/>
<path d="M344.5 587.0v-416.5h656" stroke="#c9c9c9" stroke-width="1"/>
<path d="M365.96 178.17V587.0M409.64 178.17V587.0M453.32 178.17V587.0M497.00 178.17V587.0M540.68 178.17V587.0M584.36 178.17V587.0M628.04 178.17V587.0M671.72 178.17V587.0M715.40 178.17V587.0M759.08 178.17V587.0M802.76 178.17V587.0M846.44 178.17V587.0M890.12 178.17V587.0M933.80 178.17V587.0M977.48 178.17V587.0" stroke="#7a7a7a" stroke-width="1.200" stroke-dasharray="1.200 7.536" />
<path d="M347.99 204.88H1000M347.99 248.56H1000M347.99 292.24H1000M347.99 335.92H1000M347.99 379.60H1000M347.99 423.28H1000M347.99 466.96H1000M347.99 510.64H1000M347.99 554.32H1000" stroke="#7a7a7a" stroke-width="1.200" stroke-dasharray="1.200 7.536" />
<path d="M211.500 376.600H1000" stroke="#a6a6a6" stroke-width="1" stroke-dasharray="3.200 2.300"/>
<path d="M715.400 158.500V556" stroke="#777" stroke-width="1" stroke-dasharray="5 2 1 2"/>
<g clip-path="url(#gc)">
<circle cx="732.2" cy="369.100" r="111" fill="url(#og)"/>
<!-- shallow seas -->
<g filter="url(#b2)">
<path d="M729 286l8-1 9 2 3 6-3 4-5 2 2 6-3 8-5 5-4-1 5-8 2-9-4-6-5-5z" fill="#1b6fe0" opacity=".95"/>
<path d="M752 271l6-6 12-1 8 5 2 8-3 8-5 8-8 5-8 3-4-3 6-5 8-3 4-7-1-8-6-4-6 3z" fill="#1546c0" opacity=".9"/>
<path d="M704 322l10-3 12-2 6-3 4 3-8 6-14 3-8 1z" fill="#1546c0" opacity=".3"/>
<path d="M680 355l6 1 8 7 7 8 6 9 10 4 12 3-2 4-14-2-10-5-8-9-8-9-8-7z" fill="#1a7ad0" opacity=".55"/>
<path d="M757 369l8 3 12 1 10 4 8 9 2 6-6-2-8-6-10-2-8-4-8-5z" fill="#1546c0" opacity=".5"/>
<path d="M733 325l6 0 4 8 5 9 3 12-6 2-6-10-5-12z" fill="#1546c0" opacity=".45"/>
</g>
<!-- land base -->
<g filter="url(#b1)">
<g fill="#56912a">
<path id="asia" d="M636.3 316.1 L637.1 319.3 L641.1 318.5 L645.1 317.7 L646.6 324.1 L648.2 328 L649 336 L650.6 343.9 L652.2 351 L655.4 342.3 L657.7 336 L663.3 328 L669.6 322.5 L677.5 320.9 L681.5 324.1 L682.3 330.4 L684.7 332.8 L686.5 336 L686.8 340 L687.5 346.6 L689.6 352.2 L693.1 357.8 L696.6 363.4 L698.7 369 L700.1 372.5 L701.5 375.3 L702.9 373.9 L700.8 366.2 L698 359.2 L694.5 353.6 L691.5 348 L691.3 342 L693.1 336 L696 338.5 L698 341 L701.5 346.6 L702.9 347.6 L707.8 342.4 L710.6 338.2 L711 333.5 L709.9 329.6 L706.9 325.7 L704.5 324.1 L707.7 321.7 L712.4 322.5 L715.8 320.5 L723.8 318.1 L730.1 315 L734.1 311 L737.2 305.5 L738 300.7 L735.7 296.8 L734.1 292.8 L730.9 290.4 L734.1 288 L738 288.8 L742 290.4 L745.2 288.8 L745.8 287.6 L746.6 292.8 L749 296.6 L751.6 293.8 L752.2 288 L752.3 281.7 L754.7 275.4 L753.9 269.8 L757.8 266.6 L763.4 265.8 L769.7 266.6 L772.9 267.7 L785 250 L700 235 L620 255 L610 300 L625 318z"/>
<!-- Japan -->
<path d="M752.300 300l1.200-3.500 4.500-1.800 5.200-1 3.800-3 1.200-4.200-1.800-3.800-.500-3.200 3.300.800 2.200 4.200.200 5.800-2 4.500-5 3.700-5.500 1.300-3 1.700-1.300 3.300-2.800-.300z"/>
<path d="M769.500 268.500l3-2.500 4 2 1.500 4-3 3.500-4-1.500z"/>
<path d="M765 262.500l2.500-1 1.500 6-2 1.500z"/>
<!-- Taiwan, Hainan -->
<path d="M735.300 313.800l2.500-1.200 .800 5.200-2.600 1.800z"/>
<path d="M711 325l2.500-.800 .500 2.800-2.500.800z"/>
<!-- Philippines -->
<path d="M735.1 328.4 L739.3 327.7 L740 334 L737.9 339.6 L736 334z"/>
<path d="M740 336.8 L746.3 341 L747 346.6 L742.8 346.6 L739.3 343.1z"/>
<path d="M744.2 348 L749.8 348.7 L749.1 353.6 L744.9 352.9z"/>
<!-- Sri Lanka -->
<path d="M653.800 348.800l2 1.200 .500 4.500-2 .800-1-3.500z"/>
<!-- Sumatra -->
<path d="M680.5 356.7 L684 357.1 L689.6 362 L695.9 369 L701.5 376 L703.6 381.6 L701.5 382.3 L696.6 377.4 L691 371.1 L685.4 364.8 L681.2 359.9z"/>
<!-- Java + lesser sunda -->
<path d="M702.9 383.5 L712 385.6 L720 387.5 L728 388.8 L728 390.8 L719 390 L711 388 L703.5 385.5z"/>
<path d="M730 389.5 L738 390 L743.5 390.2 L749.8 388.4 L750.5 390 L743 392.3 L730 391.5z"/>
<path d="M752 388.500l5-1.500 1 1.800-5 1.800z"/>
<!-- Borneo -->
<path d="M718 356l6-6 8-3 6 3 0 8-4 8-6 5-7-2-3-6z"/>
<!-- Sulawesi -->
<path d="M744 362l8-1 1 3-5 1 3 6-2 4-3-5-3 5-1-6z"/>
<path d="M755 366l3-3 2 5-2 4z"/>
<!-- New Guinea -->
<path d="M760.3 371.1 L766.6 373.2 L772.2 373.9 L778.5 374.6 L784.8 378.1 L790.4 383 L796 390 L793.2 391.4 L789 387.2 L784.1 386.5 L780.6 388.6 L776.4 385.8 L772.9 381.6 L768 378.8 L762.4 376 L759.6 373.2z"/>
<path d="M797 384l5 3-1 2-5-3z"/>
</g>
<!-- Australia -->
<path id="aus" d="M722.100 419.600l4.100-4.100 12.300-6.200 8.300-6.200 9.300-2 5.100-5.200 8.200 0 2.100 7.200 5.200 3.100 4.100-3.100 1-9.300 4.100 8.300 2.100 7.200 4.100 7.200 2.100 7.200-2.100 7.200-6.200 7.200-6.200 6.200-5.100 2.100-6.200-2.100-2-7.200-7.300-1-8.200-2.100-8.200 2.100-8.300 3.100-6.200 2-4.100-6.200-2-8.200z" fill="#9c6539"/>
<path d="M772.500 449.500l4 0 .5 4-3 1z" fill="#4f7a24"/>
</g>
<!-- land colouring (clipped to land) -->
<g clip-path="url(#asiac)">
<g filter="url(#b3)">
<ellipse cx="725" cy="262" rx="62" ry="9" fill="#3f741c" opacity=".85"/>
<path d="M634 322l4-16 9-15 12-12 14-9 4 4-14 9-11 12-8 14-4 14z" fill="#d9d2a4" opacity=".95"/>
</g>
<g filter="url(#b2)">
<path d="M685 277l15-5 20 1 21 4-3 7-18 1.500-20-.500-15-2z" fill="#ece6cc"/>
<path d="M661 293l19-6 16 2 20 5-2 9-14 2.500-10-1.500-20 2.500-7-6z" fill="#ebe5ca"/>
<path d="M676 284l12-5 14 3-2 8-12 1-10-2z" fill="#e2dcbc" opacity=".85"/>
<path d="M696 289l10-1 4 3-4 4-10-2z" fill="#8fae4a" opacity=".8"/>
<path d="M635 318l4-18 10-13 12-6 8 9-4 16-8 11-11 3z" fill="#e3dcbe"/>
<ellipse cx="657" cy="329" rx="6.500" ry="14" fill="#bcbd80" opacity=".85"/>
<ellipse cx="664" cy="322" rx="6" ry="5" fill="#a9b56a" opacity=".7"/>
<path d="M698 326l6 2 3 8-2 6-5-6z" fill="#b9c070" opacity=".6"/>
<ellipse cx="730" cy="302" rx="8" ry="9" fill="#6aa034" opacity=".7"/>
</g>
<path d="M668.500 305.500q11 6 24 2.500" stroke="#f4f3ea" stroke-width="1.800" stroke-opacity=".85" fill="none" filter="url(#b1)"/>
<rect x="615" y="250" width="170" height="135" filter="url(#nz)" opacity=".55"/>
</g>
<g clip-path="url(#ausc)" filter="url(#b2)">
<path d="M722 441l5 1 8-3 8-3 8-2 8 2 7 1 2 7 6 2 11-8 9-12 1-10 2 14-8 14-14 8-10-6-20-2-20 6z" fill="#5f8a2a" opacity=".85"/>
<path d="M744 402l12-3 6-5 8 0 3 8 6 3 4-4 1-8 4 9-14 6-16-2z" fill="#7d8a35" opacity=".7"/>
<ellipse cx="760" cy="424" rx="12" ry="8" fill="#bb8654" opacity=".6"/>
<ellipse cx="771" cy="428" rx="2.500" ry="4" fill="#dcc09a" opacity=".6"/>
<path d="M722 420l6-5 8-3 4 10-4 14-8 4-5-8z" fill="#8a5a3a" opacity=".5"/>
<rect x="720" y="392" width="78" height="62" filter="url(#nz2)" opacity=".5"/>
</g>
<!-- antarctica -->
<path d="M675 463.500Q714 475.800 766 474.600L766 490L675 490z" fill="#d2d2d2" filter="url(#b1)"/>
<!-- limb shading -->
<circle cx="732.2" cy="369.100" r="111" fill="url(#lg)"/>
<path d="M640 320a110 110 0 0 1 60-57" stroke="#f0ead0" stroke-opacity=".35" stroke-width="3" filter="url(#b2)"/>
</g>
<!-- grid/guides over globe (light) -->
<g clip-path="url(#gc)" opacity=".62">
<path d="M584.36 178.17V500M628.04 178.17V500M671.72 178.17V500M715.40 178.17V500M759.08 178.17V500M802.76 178.17V500M846.44 178.17V500" stroke="#d0d0e0" stroke-width="1.200" stroke-dasharray="1.200 7.536"/>
<path d="M347.99 248.56H900M347.99 292.24H900M347.99 335.92H900M347.99 379.60H900M347.99 423.28H900M347.99 466.96H900M347.99 510.64H900" stroke="#d0d0e0" stroke-width="1.200" stroke-dasharray="1.200 7.536"/>
<path d="M622 376.600H843" stroke="#d8d8d8" stroke-width="1.200" stroke-dasharray="3.200 2.300" stroke-dashoffset="-2.300"/>
<path d="M715.400 158.500V600" stroke="#e0e0e0" stroke-width="1.200" stroke-dasharray="5 2 1 2"/>
</g>

<rect x="697" y="585" width="264" height="2.500" fill="#e6e6e6"/>
<!-- selection -->
<rect x="616.500" y="253.200" width="230" height="231.500" stroke="#9b9b9b" stroke-width="1.300"/>
<path d="M731 249v-17" stroke="#9b9b9b" stroke-width="1.300"/>
<g fill="#fff" stroke="#8c8c8c" stroke-width="1.500">
<circle cx="616.500" cy="253.200" r="4.300"/><circle cx="731.200" cy="253.200" r="4.300"/><circle cx="846.500" cy="253.200" r="4.300"/>
<circle cx="616.500" cy="369" r="4.300"/><circle cx="846.500" cy="369" r="4.300"/>
<circle cx="616.500" cy="484.700" r="4.300"/><circle cx="731.200" cy="484.700" r="4.300"/><circle cx="846.500" cy="484.700" r="4.300"/>
</g>
<!-- rotate handle -->
<path d="M733.600 229.400A7 7 0 1 1 738.200 222.200" stroke="#8c8c8c" stroke-width="4.900" fill="none"/>
<path d="M732.600 221.500h12.800l-6.200 7.200z" fill="#fff" stroke="#8c8c8c" stroke-width="1.200" stroke-linejoin="round"/>
<path d="M733.600 229.400A7 7 0 1 1 738.200 222.800" stroke="#fff" stroke-width="1.900" fill="none"/>
<path d="M732.400 228.300l2.400 2.200" stroke="#8c8c8c" stroke-width="1.100"/>
<!-- 3d rotate control -->
<circle cx="732.200" cy="369.400" r="20.800" fill="#dedee4" fill-opacity=".96" filter="url(#b1)"/>
<g transform="translate(732.200 369.400) scale(1.090) translate(-732.200 -369.400)"><g stroke="#7c7e85" stroke-width="1.750" fill="none" stroke-linecap="round">
<path d="M727 374.300c-6-.8-10.500-2.700-10.500-4.900 0-3 7.200-5.400 16-5.400s16 2.400 16 5.400c0 2.400-5.200 4.500-12 5.200"/>
<path d="M736.800 367.500c-.3-8.500-2.400-14.800-5-14.800-2.900 0-5.200 7.400-5.200 16.500s2.300 16.500 5.200 16.500c2.200 0 4.100-4.200 4.800-10.300"/>
</g>
<path d="M733.800 366.500l6 0-3 4.800z" fill="#7c7e85"/>
<path d="M736.500 371.800l0 5.800-4.800-2.900z" fill="#7c7e85"/></g>

</svg>
</div>

<!-- ===== NOTES ===== -->
<div class="a" style="left:187px;top:601px;width:510px;height:1px;background:#c8c8c8"></div><div class="a" style="left:697px;top:599px;width:264px;height:1px;background:#c8c8c8"></div><div class="a" style="left:961px;top:601px;width:39px;height:1px;background:#c8c8c8"></div>
<span class="t" style="left:196px;top:608px;font-size:13px;line-height:16px;height:16px;color:#505050">单击此处添加备注</span>
</body></html>
